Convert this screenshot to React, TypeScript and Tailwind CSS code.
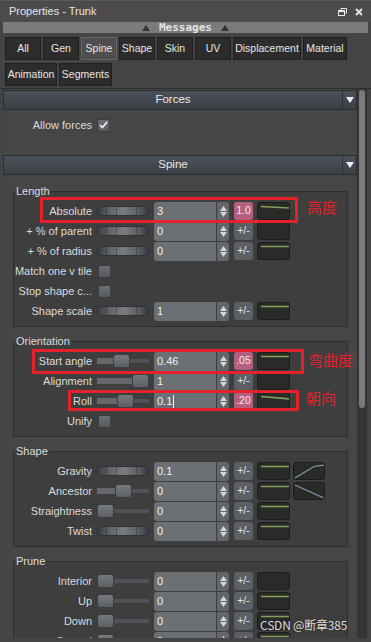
import React from 'react';

type Row = {
  label: string;
  check?: boolean;
  slider?: 'notch' | number;
  value?: string;
  pink?: string;
  curve?: 'flat' | 'empty' | 'tilt' | 'tilt2';
  extra?: 'rise' | 'fall';
  cursor?: boolean;
};

const groups: { title: string; rows: Row[] }[] = [
  {
    title: 'Length',
    rows: [
      { label: 'Absolute', slider: 'notch', value: '3', pink: '1.0', curve: 'tilt' },
      { label: '+ % of parent', slider: 'notch', value: '0', curve: 'empty' },
      { label: '+ % of radius', slider: 'notch', value: '0', curve: 'flat' },
      { label: 'Match one v tile', check: true },
      { label: 'Stop shape c...', check: true },
      { label: 'Shape scale', slider: 'notch', value: '1', curve: 'flat' },
    ],
  },
  {
    title: 'Orientation',
    rows: [
      { label: 'Start angle', slider: 16, value: '0.46', pink: '.05', curve: 'flat' },
      { label: 'Alignment', slider: 35, value: '1', curve: 'empty' },
      { label: 'Roll', slider: 20, value: '0.1', pink: '.20', curve: 'tilt2', cursor: true },
      { label: 'Unify', check: true },
    ],
  },
  {
    title: 'Shape',
    rows: [
      { label: 'Gravity', slider: 'notch', value: '0.1', curve: 'flat', extra: 'rise' },
      { label: 'Ancestor', slider: 18, value: '0', curve: 'flat', extra: 'fall' },
      { label: 'Straightness', slider: 0, value: '0', curve: 'flat' },
      { label: 'Twist', slider: 'notch', value: '0', curve: 'flat' },
    ],
  },
  {
    title: 'Prune',
    rows: [
      { label: 'Interior', slider: 0, value: '0', curve: 'empty' },
      { label: 'Up', slider: 0, value: '0', curve: 'flat' },
      { label: 'Down', slider: 0, value: '0', curve: 'flat' },
      { label: 'Spread', slider: 0, value: '0', curve: 'flat' },
    ],
  },
];

const tabs = [
  { name: 'All', w: 'w-[36px]' },
  { name: 'Gen', w: 'w-[36px]' },
  { name: 'Spine', w: 'w-[36px]', on: true },
  { name: 'Shape', w: 'w-[36px]' },
  { name: 'Skin', w: 'w-[36px]' },
  { name: 'UV', w: 'w-[36px]' },
  { name: 'Displacement', w: 'w-[68px]' },
  { name: 'Material', w: 'w-[44px]' },
  { name: 'Animation', w: 'w-[52px]' },
  { name: 'Segments', w: 'w-[53px]' },
];

const Tri = ({ down }: { down?: boolean }) => (
  <svg width="8" height="6" viewBox="0 0 8 6">
    <path d={down ? 'M0 0H8L4 6Z' : 'M0 6H8L4 0Z'} fill="currentColor" />
  </svg>
);

const Header = ({ title }: { title: string }) => (
  <div className="flex h-[20px]">
    <div className="flex flex-1 items-center justify-center border border-[#2a2d32] bg-gradient-to-b from-[#4c525b] to-[#3b4047] text-[11.5px] text-[#e8e8e8]">
      {title}
    </div>
    <div className="flex w-[14px] items-center justify-center border border-l-0 border-[#2a2d32] bg-gradient-to-b from-[#4c525b] to-[#3b4047] text-[#f0f0f0]">
      <Tri down />
    </div>
  </div>
);

const Check = ({ on }: { on?: boolean }) => (
  <div className="flex h-[13px] w-[13px] items-center justify-center rounded-[2px] border border-[#383b3f] bg-gradient-to-b from-[#6b6f75] to-[#575b60]">
    {on && (
      <svg width="9" height="8" viewBox="0 0 9 8">
        <path d="M1 4.2l2.4 2.4L8 1" stroke="#f2f2f2" strokeWidth="1.7" fill="none" />
      </svg>
    )}
  </div>
);

const Notch = () => (
  <div className="flex h-[10px] w-[52px] overflow-hidden rounded-[4px] border border-[#2e3135] bg-[linear-gradient(to_right,#3a3d41,#5e6267_22%,#7a7e83_50%,#5e6267_78%,#3a3d41)]">
    <div className="w-[9px] border-r border-[#3c3f43]" />
    <div className="w-[10px] border-r border-[#4a4d51]" />
    <div className="w-[20px] border-r border-[#4a4d51]" />
    <div className="w-[9px] border-r border-[#3c3f43]" />
  </div>
);

const Thumb = ({ at }: { at: number }) => (
  <div className="flex h-[15px] w-[52px] items-center">
    {at > 0 && <div className="h-[6px] bg-[#64686d]" style={{ width: at }} />}
    <div className="h-[14px] w-[17px] shrink-0 rounded-[3px] border border-[#3a3d41] bg-gradient-to-b from-[#767a7f] to-[#5d6166]" />
    <div className="h-[4px] flex-1 bg-[#4f5358]" />
  </div>
);

const Curve = ({ kind }: { kind: Row['curve'] }) => {
  const d =
    kind === 'tilt' ? 'M2 2.5L31 4' : kind === 'tilt2' ? 'M2 2.5L31 5' : kind === 'flat' ? 'M2 2.5H31' : '';
  return (
    <div className="h-[18px] w-[33px] overflow-hidden rounded-[3px] border border-[#1b1c1b] bg-[#292b29]">
      {d && (
        <svg width="33" height="18" viewBox="-1 -1 33 18">
          <path d={d} stroke="#84a05a" strokeWidth="1.6" fill="none" />
        </svg>
      )}
    </div>
  );
};

const Extra = ({ kind }: { kind: 'rise' | 'fall' }) => (
  <div className="h-[18px] w-[32px] overflow-hidden rounded-[3px] border border-[#1b1c1b] bg-[#292b29]">
    <svg width="32" height="18" viewBox="-1 -1 32 18">
      <path
        d={kind === 'rise' ? 'M0 14L19 2.5L30 1' : 'M0 1L30 14.5'}
        stroke="#8299b0"
        strokeWidth="1.2"
        fill="none"
      />
    </svg>
  </div>
);

const NumBox = ({ value, cursor }: { value: string; cursor?: boolean }) => (
  <div className="flex h-[19px] w-[75px] overflow-hidden rounded-[3px]">
    <div className="flex flex-1 items-center bg-[#6b7075] pl-[3px] text-[#f0f0f0]">
      {value}
      {cursor && <span className="ml-[1px] h-[13px] w-[1px] bg-[#f0f0f0]" />}
    </div>
    <div className="ml-[1px] flex w-[12px] flex-col items-center justify-center gap-[1px] bg-[#63676d] text-[#d6d6d6]">
      <svg width="7" height="5" viewBox="0 0 7 5">
        <path d="M0 5H7L3.5 0Z" fill="currentColor" />
      </svg>
      <svg width="7" height="5" viewBox="0 0 7 5">
        <path d="M0 0H7L3.5 5Z" fill="currentColor" />
      </svg>
    </div>
  </div>
);

const PropRow = ({ row }: { row: Row }) => (
  <div className="flex h-[20px] items-center">
    <div className="w-[78px] shrink-0 truncate text-right">{row.label}</div>
    {row.check ? (
      <div className="ml-[6px]">
        <Check />
      </div>
    ) : (
      <>
        <div className="ml-[5px] flex w-[52px] items-center">
          {row.slider === 'notch' ? <Notch /> : <Thumb at={row.slider ?? 0} />}
        </div>
        <div className="ml-[5px]">
          <NumBox value={row.value ?? ''} cursor={row.cursor} />
        </div>
        <div
          className={
            row.pink
              ? 'ml-[5px] flex h-[18px] w-[19px] items-center justify-center rounded-[3px] bg-[#b3607f] text-[10.5px] text-[#f6e8ee]'
              : 'ml-[5px] flex h-[18px] w-[19px] items-center justify-center rounded-[3px] bg-[#5b6066] text-[10.5px] text-[#e8e8e8]'
          }
        >
          {row.pink ?? '+/-'}
        </div>
        <div className="ml-[4px]">
          <Curve kind={row.curve} />
        </div>
        {row.extra && (
          <div className="ml-[3px]">
            <Extra kind={row.extra} />
          </div>
        )}
      </>
    )}
  </div>
);

const Group = ({ title, rows, first }: { title: string; rows: Row[]; first?: boolean }) => (
  <fieldset
    className={
      first
        ? 'mt-[10px] ml-[10px] mr-[9px] border border-[#2d2d2d] bg-[#3e3e3e] pt-[4px] pb-[5px]'
        : 'mt-[8px] ml-[10px] mr-[9px] border border-[#2d2d2d] bg-[#3e3e3e] pt-[4px] pb-[5px]'
    }
  >
    <legend className="px-[2px] leading-[12px]">{title}</legend>
    {rows.map((r) => (
      <PropRow key={r.label} row={r} />
    ))}
  </fieldset>
);

export default function App() {
  return (
    <div className="relative h-[642px] w-[371px] overflow-hidden bg-[#444444] font-['Liberation_Sans',Arial,sans-serif] text-[11px] text-[#dcdcdc]">
      {/* title bar */}
      <div className="flex h-[22px] items-center justify-between border-t border-[#5a5a5a] bg-[#4b4b4b] pl-[9px] pr-[8px]">
        <span className="text-[11px] text-[#e6e6e6]">Properties - Trunk</span>
        <div className="flex items-center gap-[8px] text-[#e6e6e6]">
          <svg width="9" height="8" viewBox="0 0 9 8">
            <path d="M3 2V0.5H8.5V5H7" stroke="currentColor" strokeWidth="1" fill="none" />
            <rect x="0.5" y="2.5" width="6" height="5" stroke="currentColor" strokeWidth="1" fill="none" />
            <rect x="0.5" y="2.5" width="6" height="1.6" fill="currentColor" />
          </svg>
          <svg width="8" height="8" viewBox="0 0 8 8">
            <path d="M1 1L7 7M7 1L1 7" stroke="currentColor" strokeWidth="1.8" />
          </svg>
        </div>
      </div>

      {/* messages bar */}
      <div className="mx-[3px] flex h-[11px] items-center justify-center gap-[9px] bg-[#7b7b7b] font-['DejaVu_Sans_Mono',monospace] text-[11px] font-bold leading-none text-[#e4e4e4]">
        <span className="text-[#333]">
          <Tri />
        </span>
        <span>Messages</span>
        <span className="text-[#333]">
          <Tri />
        </span>
      </div>

      {/* tabs */}
      <div className="flex flex-wrap gap-x-[2px] gap-y-[3px] border-b border-[#2f2f2f] px-[5px] pt-[4px] pb-[2px]">
        {tabs.map((t) => (
          <div
            key={t.name}
            className={
              t.on
                ? `flex h-[23px] ${t.w} items-center justify-center border border-[#666] bg-[#4e4e4e] text-[10.5px] text-[#e6e6e6]`
                : `flex h-[23px] ${t.w} items-center justify-center border border-[#1f1f1f] bg-[#2c2c2c] text-[10.5px] text-[#e6e6e6]`
            }
          >
            {t.name}
          </div>
        ))}
      </div>

      {/* scroll area */}
      <div className="flex h-[549px]">
        <div className="ml-[3px] w-[354px] overflow-hidden bg-[#464646] pt-[1px]">
          <Header title="Forces" />
          <div className="h-[45px] pt-[5px]">
            <div className="flex h-[20px] items-center">
              <div className="w-[89px] text-right">Allow forces</div>
              <div className="ml-[5px]">
                <Check on />
              </div>
            </div>
          </div>
          <Header title="Spine" />
          {groups.map((g, i) => (
            <Group key={g.title} title={g.title} rows={g.rows} first={i === 0} />
          ))}
        </div>
        <div className="w-[10px] bg-[#353535] px-[2px] pt-[1px]">
          <div className="h-[318px] rounded-[3px] bg-[#7b7b7b]" />
        </div>
      </div>

      {/* annotations */}
      <div className="absolute left-[40px] top-[197px] h-[26px] w-[258px] border-[3px] border-[#e3222b]" />
      <div className="absolute left-[307px] top-[199px] font-['Noto_Sans_CJK_SC',sans-serif] text-[15px] leading-[16px] text-[#e3222b]">
        高度
      </div>
      <div className="absolute left-[32px] top-[349px] h-[25px] w-[272px] border-[3px] border-[#e3222b]" />
      <div className="absolute left-[308px] top-[352px] font-['Noto_Sans_CJK_SC',sans-serif] text-[15px] leading-[16px] text-[#e3222b]">
        弯曲度
      </div>
      <div className="absolute left-[68px] top-[390px] h-[21px] w-[231px] border-[3px] border-[#e3222b]" />
      <div className="absolute left-[306px] top-[390px] font-['Noto_Sans_CJK_SC',sans-serif] text-[15px] leading-[16px] text-[#e3222b]">
        朝向
      </div>

      {/* watermark */}
      <div className="absolute left-[260px] top-[617px] font-['Noto_Sans_CJK_SC',sans-serif] text-[12px] leading-[15px] tracking-[-0.2px] text-[#f4f4f4]/90 [text-shadow:0_0_2px_rgba(0,0,0,0.5)]">
        CSDN @断章385
      </div>
    </div>
  );
}
